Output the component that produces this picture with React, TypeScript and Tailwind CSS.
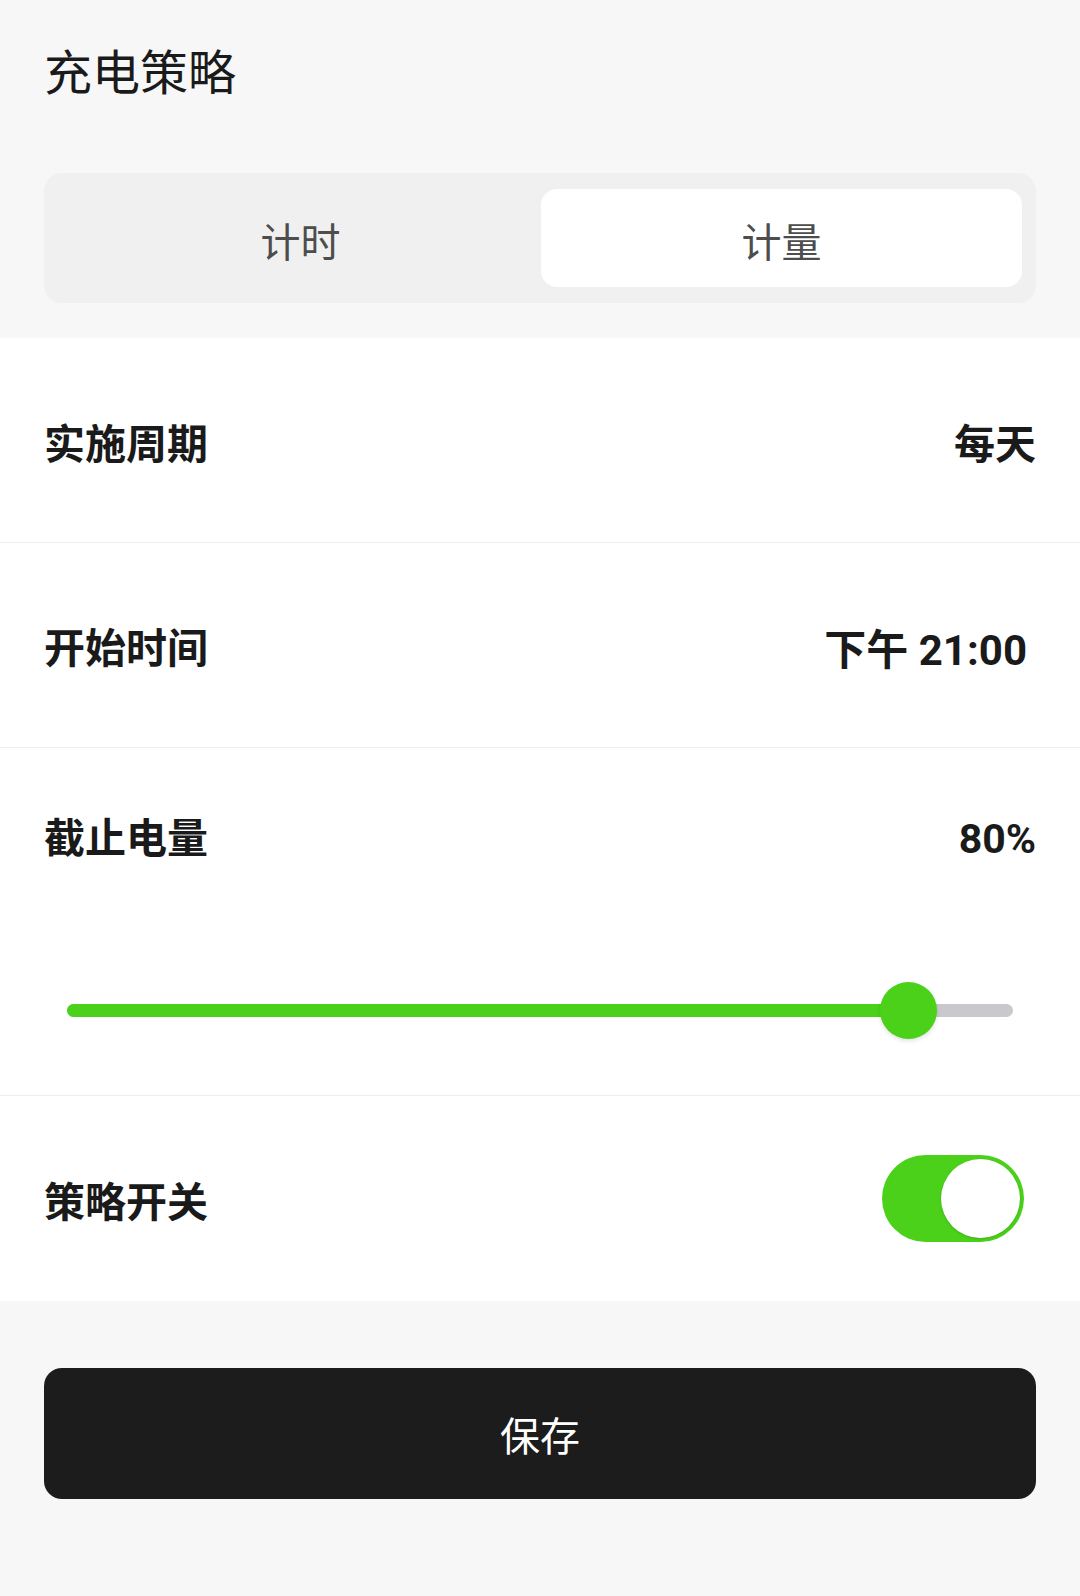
export default function App() {
  return (
    <div
      className="min-h-[1596px] w-[1080px] bg-[#f7f7f7] flex flex-col"
      style={{ fontFamily: "Roboto, 'Noto Sans CJK SC', sans-serif" }}
    >
      {/* header */}
      <div className="px-[44px] pt-[42px] pb-[35px]">
        <h1 className="text-[48px] leading-[64px] font-normal text-[#1a1a1a]">充电策略</h1>
        <div className="mt-[67px] h-[130px] rounded-[18px] bg-[#f0f0f0] pl-[16px] pr-[14px] py-[16px] grid grid-cols-2">
          <button className="rounded-[16px] pt-[12px] text-[40px] text-[#4d4d4d] flex items-center justify-center">
            计时
          </button>
          <button className="rounded-[16px] pt-[12px] bg-white text-[40px] text-[#4d4d4d] flex items-center justify-center">
            计量
          </button>
        </div>
      </div>

      {/* settings */}
      <div className="bg-white">
        <div className="h-[205px] px-[44px] pt-[12px] flex items-center justify-between border-b border-[#eeeeee]">
          <span className="text-[41px] font-bold text-[#1a1a1a]">实施周期</span>
          <span className="text-[41px] font-bold text-[#1a1a1a]">每天</span>
        </div>
        <div className="h-[205px] px-[44px] pt-[10px] flex items-center justify-between border-b border-[#eeeeee]">
          <span className="text-[41px] font-bold text-[#1a1a1a]">开始时间</span>
          <span className="text-[42px] font-bold text-[#1a1a1a] pr-[9px]">下午 21:00</span>
        </div>
        <div className="h-[348px] px-[44px] border-b border-[#eeeeee] flex flex-col">
          <div className="mt-[64px] h-[56px] flex items-center justify-between">
            <span className="text-[41px] font-bold text-[#1a1a1a]">截止电量</span>
            <span className="text-[41px] font-bold text-[#1a1a1a]">80%</span>
          </div>
          <div className="mt-[136px] px-[23px]">
            <div className="relative h-[13px] rounded-full bg-[#c9c9cd] flex">
              <div className="w-[841px] h-full rounded-full bg-[#4cd11b]" />
              <div className="absolute left-[813px] top-[-22px] w-[57px] h-[57px] rounded-full bg-[#4cd11b] shadow-[0_2px_4px_rgba(0,0,0,0.12)]" />
            </div>
          </div>
        </div>
        <div className="h-[205px] px-[44px] pt-[10px] flex items-center justify-between">
          <span className="text-[41px] font-bold text-[#1a1a1a]">策略开关</span>
          <div className="mr-[12px] mb-[10px] w-[142px] h-[87px] rounded-full bg-[#4cd11b] p-[4px] flex justify-end">
            <div className="w-[79px] h-[79px] rounded-full bg-white shadow-[0_1px_3px_rgba(0,0,0,0.15)]" />
          </div>
        </div>
      </div>

      {/* footer */}
      <div className="px-[44px] pt-[67px]">
        <button className="w-full h-[131px] rounded-[18px] bg-[#1c1c1c] pt-[8px] text-white text-[40px] flex items-center justify-center">
          保存
        </button>
      </div>
    </div>
  );
}
